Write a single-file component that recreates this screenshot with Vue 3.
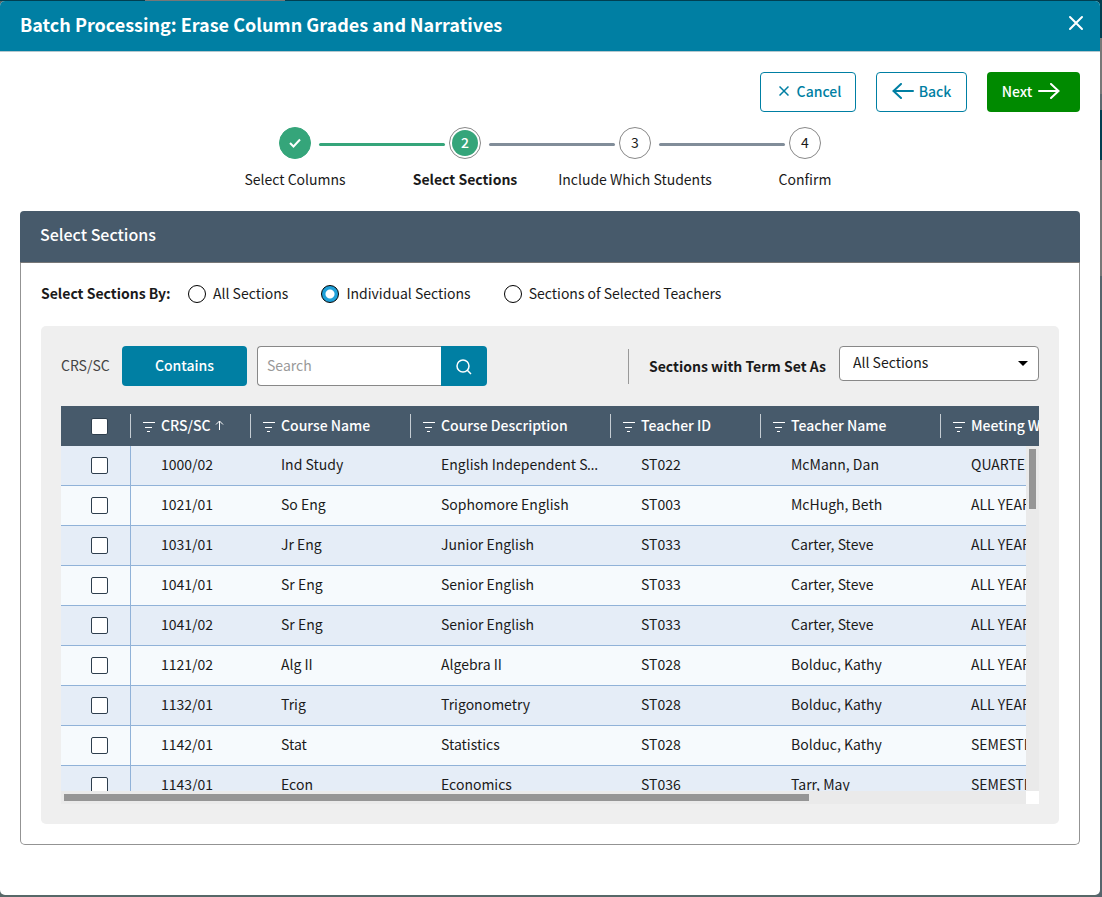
<script setup>
import { ref } from 'vue'

const steps = [
  { label: 'Select Columns', state: 'done' },
  { label: 'Select Sections', state: 'current' },
  { label: 'Include Which Students', state: 'todo' },
  { label: 'Confirm', state: 'todo' },
]

const modes = [
  { value: 'all', label: 'All Sections' },
  { value: 'individual', label: 'Individual Sections' },
  { value: 'teachers', label: 'Sections of Selected Teachers' },
]
const mode = ref('individual')
const search = ref('')

const columns = ['CRS/SC', 'Course Name', 'Course Description', 'Teacher ID', 'Teacher Name', 'Meeting When']

const rows = [
  ['1000/02', 'Ind Study', 'English Independent Study', 'ST022', 'McMann, Dan', 'QUARTER 1'],
  ['1021/01', 'So Eng', 'Sophomore English', 'ST003', 'McHugh, Beth', 'ALL YEAR'],
  ['1031/01', 'Jr Eng', 'Junior English', 'ST033', 'Carter, Steve', 'ALL YEAR'],
  ['1041/01', 'Sr Eng', 'Senior English', 'ST033', 'Carter, Steve', 'ALL YEAR'],
  ['1041/02', 'Sr Eng', 'Senior English', 'ST033', 'Carter, Steve', 'ALL YEAR'],
  ['1121/02', 'Alg II', 'Algebra II', 'ST028', 'Bolduc, Kathy', 'ALL YEAR'],
  ['1132/01', 'Trig', 'Trigonometry', 'ST028', 'Bolduc, Kathy', 'ALL YEAR'],
  ['1142/01', 'Stat', 'Statistics', 'ST028', 'Bolduc, Kathy', 'SEMESTER 1'],
  ['1143/01', 'Econ', 'Economics', 'ST036', 'Tarr, May', 'SEMESTER 2'],
]
</script>

<template>
  <div class="backdrop">
    <section class="dialog" role="dialog" aria-labelledby="dialog-title">
      <header class="titlebar">
        <h1 id="dialog-title">Batch Processing: Erase Column Grades and Narratives</h1>
        <button class="close" type="button" aria-label="Close">
          <svg viewBox="0 0 16 16" width="16" height="16"><path d="M2 2l12 12M14 2L2 14" /></svg>
        </button>
      </header>

      <div class="content">
        <div class="actions">
          <button class="btn outline cancel" type="button">
            <svg viewBox="0 0 10 10" width="10" height="10"><path d="M0.5 0.5l9 9M9.5 0.5l-9 9" stroke-width="1.5" /></svg>
            Cancel
          </button>
          <button class="btn outline back" type="button">
            <svg viewBox="0 0 22 16" width="22" height="16"><path d="M21 8H1.5M9 1L1.5 8L9 15" stroke-width="2" stroke-linecap="round" /></svg>
            Back
          </button>
          <button class="btn next" type="button">
            Next
            <svg viewBox="0 0 22 16" width="22" height="16"><path d="M1 8H20.500M13 1l7.500 7L13 15" stroke-width="2" stroke-linecap="round" /></svg>
          </button>
        </div>

        <ol class="steps">
          <li v-for="(s, i) in steps" :key="s.label" :class="s.state">
            <div class="track">
              <i class="line before"></i>
              <span class="dot">
                <svg v-if="s.state === 'done'" viewBox="0 0 12 10" width="12" height="10"><path d="M1 5l3.500 3.500L11 1.500" /></svg>
                <b v-else>{{ i + 1 }}</b>
              </span>
              <i class="line after"></i>
            </div>
            <span class="step-label">{{ s.label }}</span>
          </li>
        </ol>

        <div class="card">
          <h2>Select Sections</h2>
          <div class="card-body">
            <div class="modes" role="radiogroup" aria-labelledby="modes-label">
              <strong id="modes-label">Select Sections By:</strong>
              <label v-for="m in modes" :key="m.value">
                <input v-model="mode" type="radio" name="mode" :value="m.value" />
                <span>{{ m.label }}</span>
              </label>
            </div>

            <div class="panel">
              <div class="toolbar">
                <label class="field-name" for="search">CRS/SC</label>
                <button class="contains" type="button">Contains</button>
                <div class="search">
                  <input id="search" v-model="search" type="text" placeholder="Search" />
                  <button type="button" aria-label="Search">
                    <svg viewBox="0 0 16 16" width="16" height="16"><circle cx="7" cy="7" r="6" /><path d="M11.300 11.300L15 15" /></svg>
                  </button>
                </div>
                <div class="term">
                  <label for="term">Sections with Term Set As</label>
                  <div class="select">
                    <select id="term"><option>All Sections</option></select>
                    <svg viewBox="0 0 10 5" width="10" height="5"><path d="M0 0h10L5 5z" /></svg>
                  </div>
                </div>
              </div>

              <div class="grid">
                <div class="viewport">
                  <table>
                    <colgroup>
                      <col class="c-check" /><col class="c-crs" /><col class="c-name" /><col class="c-desc" />
                      <col class="c-id" /><col class="c-teacher" /><col class="c-when" />
                    </colgroup>
                    <thead>
                      <tr>
                        <th><div class="pick"><input type="checkbox" aria-label="Select all sections" /></div></th>
                        <th v-for="(c, i) in columns" :key="c" scope="col">
                          <div class="head">
                            <svg viewBox="0 0 12 10" width="12" height="10"><path d="M0 0.500h12M2 5.500h7M4 9.500h3" /></svg>
                            <span>{{ c }}</span>
                            <svg v-if="i === 0" class="sort" viewBox="0 0 9 10" width="9" height="10"><path d="M4.500 10V1M1 4.500l3.500-3.500L8 4.500" /></svg>
                          </div>
                        </th>
                      </tr>
                    </thead>
                    <tbody>
                      <tr v-for="r in rows" :key="r[0]">
                        <td><div class="pick"><input type="checkbox" :aria-label="'Select ' + r[0]" /></div></td>
                        <td v-for="(v, i) in r" :key="i"><span>{{ v }}</span></td>
                      </tr>
                    </tbody>
                  </table>
                </div>
                <div class="vbar"><i></i></div>
                <div class="hbar"><i></i></div>
                <div class="corner"></div>
              </div>
            </div>
          </div>
        </div>
      </div>
    </section>
  </div>
</template>

<style>
body {
  background: #576868;
}
</style>

<style scoped>
* {
  box-sizing: border-box;
}
.backdrop {
  min-height: 100vh;
  padding: 1px 2px 2px 0;
  background:
    linear-gradient(90deg, #003f51 145px, #777 145px, #777 285px, #003f51 285px) top / 100% 1px no-repeat,
    linear-gradient(#003f51 38px, #777 38px, #777 94px, #5c696f 94px, #5c696f 110px, #003f51 110px, #003f51 160px, #777 160px, #777 276px, #56656c 276px) right / 6px 100% no-repeat,
    #576868;
  font-family: "Noto Sans CJK SC", "Noto Sans", sans-serif;
  font-size: 14px;
  line-height: 20px;
  color: #1a1a1a;
}
button,
input,
select {
  font: inherit;
}
button {
  padding: 0;
  border: 0;
}
svg {
  flex: none;
  fill: none;
  stroke: currentColor;
}
.dialog {
  min-height: calc(100vh - 3px);
  background: #fff;
  border-radius: 5px;
  overflow: hidden;
}
.titlebar {
  display: flex;
  align-items: center;
  justify-content: space-between;
  height: 51px;
  padding: 0 16px 4px 20px;
  background: #007fa3;
  border-bottom: 1px solid #b5c8ce;
  color: #fff;
}
h1 {
  margin: 0;
  font-size: 18px;
  line-height: 24px;
  font-weight: 700;
}
.close {
  display: flex;
  padding-bottom: 2px;
  background: none;
  color: #fff;
}
.close svg {
  stroke-width: 2;
  stroke-linecap: round;
}
.content {
  padding: 20px;
}
.actions {
  display: flex;
  justify-content: flex-end;
  gap: 20px;
}
.btn {
  display: flex;
  align-items: center;
  justify-content: center;
  height: 40px;
  padding-bottom: 3px;
  border-radius: 4px;
  font-weight: 500;
}
.outline {
  background: #fff;
  border: 1px solid #007fa3;
  color: #007fa3;
}
.cancel {
  width: 96px;
  padding-left: 4px;
  gap: 8px;
}
.back {
  width: 91px;
  gap: 5px;
}
.next {
  width: 93px;
  padding-right: 5px;
  gap: 6px;
  background: #008a00;
  color: #fff;
}
.steps {
  display: flex;
  max-width: 680px;
  margin: 15px auto 0;
  padding: 0;
  list-style: none;
}
.steps li {
  flex: 1;
  min-width: 0;
  text-align: center;
  white-space: nowrap;
}
.track {
  display: flex;
  align-items: center;
}
.line {
  height: 3px;
  margin-top: 2px;
  background: #818d99;
}
.before {
  width: calc(50% - 20px);
  margin-right: 4px;
  border-radius: 0 2px 2px 0;
}
.after {
  width: calc(50% - 24px);
  margin-left: 8px;
  border-radius: 2px 0 0 2px;
}
.done .after,
.current .before {
  background: #35a57a;
}
.steps li:first-child .before,
.steps li:last-child .after {
  visibility: hidden;
}
.dot {
  display: flex;
  flex: none;
  align-items: center;
  justify-content: center;
  width: 32px;
  height: 32px;
  border: 1px solid #888;
  border-radius: 50%;
}
.dot b {
  padding-bottom: 2px;
  font-weight: 400;
}
.done .dot {
  background: #35a57a;
  border-color: #35a57a;
  color: #fff;
}
.done svg {
  stroke-width: 2;
}
.current .dot b {
  width: 26px;
  height: 26px;
  border-radius: 50%;
  background: #35a57a;
  color: #fff;
  font-weight: 500;
  line-height: 24px;
}
.step-label {
  display: block;
  margin-top: 10px;
}
.current .step-label {
  font-weight: 700;
}
.card {
  margin-top: 22px;
}
h2 {
  height: 52px;
  margin: 0;
  padding: 11px 20px;
  border-bottom: 1px solid #777;
  border-radius: 4px 4px 0 0;
  background: #475a6b;
  color: #fff;
  font-size: 16px;
  line-height: 24px;
  font-weight: 500;
}
.card-body {
  padding: 21px 20px 20px;
  border: 1px solid #939393;
  border-top: 0;
  border-radius: 0 0 5px 5px;
}
.modes {
  display: flex;
  align-items: center;
  height: 20px;
}
.modes strong {
  min-width: 147px;
  padding-bottom: 2px;
  font-weight: 700;
}
.modes span {
  padding-bottom: 2px;
}
.modes label {
  display: flex;
  align-items: center;
  gap: 7px;
  margin-right: 33px;
}
.modes input {
  appearance: none;
  width: 18px;
  height: 18px;
  margin: 0;
  border: 1px solid #000;
  border-radius: 50%;
  background: #fff;
}
.modes input:checked {
  background: radial-gradient(circle, #fff 4px, #1fa0d8 5px);
}
.panel {
  margin-top: 22px;
  padding: 20px;
  border-radius: 5px;
  background: #efefef;
}
.toolbar {
  display: flex;
  height: 40px;
}
.field-name {
  width: 61px;
  line-height: 38px;
  color: #444;
}
.contains {
  width: 125px;
  height: 40px;
  padding-bottom: 2px;
  border-radius: 4px;
  background: #007fa3;
  color: #fff;
  font-weight: 500;
}
.search {
  display: flex;
  width: 230px;
  margin-left: 10px;
}
.search input {
  flex: 1;
  min-width: 0;
  padding: 0 9px 2px;
  border: 1px solid #888;
  border-right: 0;
  border-radius: 4px 0 0 4px;
  background: #fff;
}
.search input::placeholder {
  color: #999;
}
.search button {
  display: flex;
  align-items: center;
  justify-content: center;
  width: 46px;
  padding-top: 2px;
  border-radius: 0 4px 4px 0;
  background: #007fa3;
  color: #fff;
}
.search svg {
  stroke-width: 1.5;
}
.term {
  display: flex;
  height: 35px;
  margin: 0 0 0 auto;
}
.term label {
  min-width: 211px;
  height: 35px;
  margin-top: 3px;
  padding: 0 10px 0 20px;
  border-left: 1px solid #999;
  line-height: 35px;
  font-weight: 700;
  white-space: nowrap;
}
.select {
  display: grid;
  width: 200px;
  align-items: center;
}
.select > * {
  grid-area: 1 / 1;
}
.select select {
  appearance: none;
  width: 100%;
  height: 35px;
  padding: 0 13px 3px;
  border: 1px solid #888;
  border-radius: 4px;
  background: #fff;
  color: #1a1a1a;
}
.select svg {
  justify-self: end;
  margin-right: 11px;
  stroke: none;
  fill: #000;
  pointer-events: none;
}
.grid {
  display: grid;
  grid-template: 40px 345px 13px / minmax(0, 1fr) 13px;
  margin-top: 20px;
}
.viewport {
  grid-area: 1 / 1 / 3 / 3;
  overflow: hidden;
}
table {
  width: 1080px;
  table-layout: fixed;
  border-collapse: separate;
  border-spacing: 0;
}
.c-check { width: 70px; }
.c-crs { width: 120px; }
.c-name { width: 160px; }
.c-desc { width: 200px; }
.c-id { width: 150px; }
.c-teacher { width: 180px; }
.c-when { width: 200px; }
th {
  height: 40px;
  padding: 0;
  background: linear-gradient(#c5ccd2, #c5ccd2) right / 1px 24px no-repeat, #475a6b;
  color: #fff;
  font-weight: 500;
  text-align: left;
}
.head {
  display: flex;
  align-items: center;
  gap: 6px;
  padding: 0 0 2px 12px;
  white-space: nowrap;
}
.head svg {
  margin-top: 3px;
}
.head .sort {
  margin: 0 0 0 -2px;
}
/* The cell's own family supplies the baseline ellipsis; the span sets the text. */
td {
  height: 40px;
  padding: 0 8px 2px 30px;
  border-bottom: 1px solid #90b2d8;
  background: #f6fafd;
  font-family: "Noto Sans", sans-serif;
  overflow: hidden;
  text-overflow: ellipsis;
  white-space: nowrap;
}
td span {
  font-family: "Noto Sans CJK SC", "Noto Sans", sans-serif;
}
tbody tr:nth-child(odd) td {
  background: #e5edf7;
}
td:first-child {
  padding: 0;
  border-right: 1px solid #90b2d8;
}
.pick {
  display: flex;
  justify-content: center;
  padding-left: 7px;
}
.pick input {
  appearance: none;
  width: 17px;
  height: 17px;
  margin: 0;
  border: 1px solid #2e3e4d;
  border-radius: 2px;
  background: #fff;
}
.vbar,
.hbar {
  z-index: 1;
  padding: 3px;
  background: #eaeaea;
}
.vbar {
  grid-area: 2 / 2;
}
.hbar {
  grid-area: 3 / 1;
}
.vbar i,
.hbar i {
  display: block;
  background: #959595;
}
.vbar i {
  height: 60px;
}
.hbar i {
  width: 77.7%;
  height: 7px;
}
.corner {
  grid-area: 3 / 2;
  background: #fff;
}
</style>
